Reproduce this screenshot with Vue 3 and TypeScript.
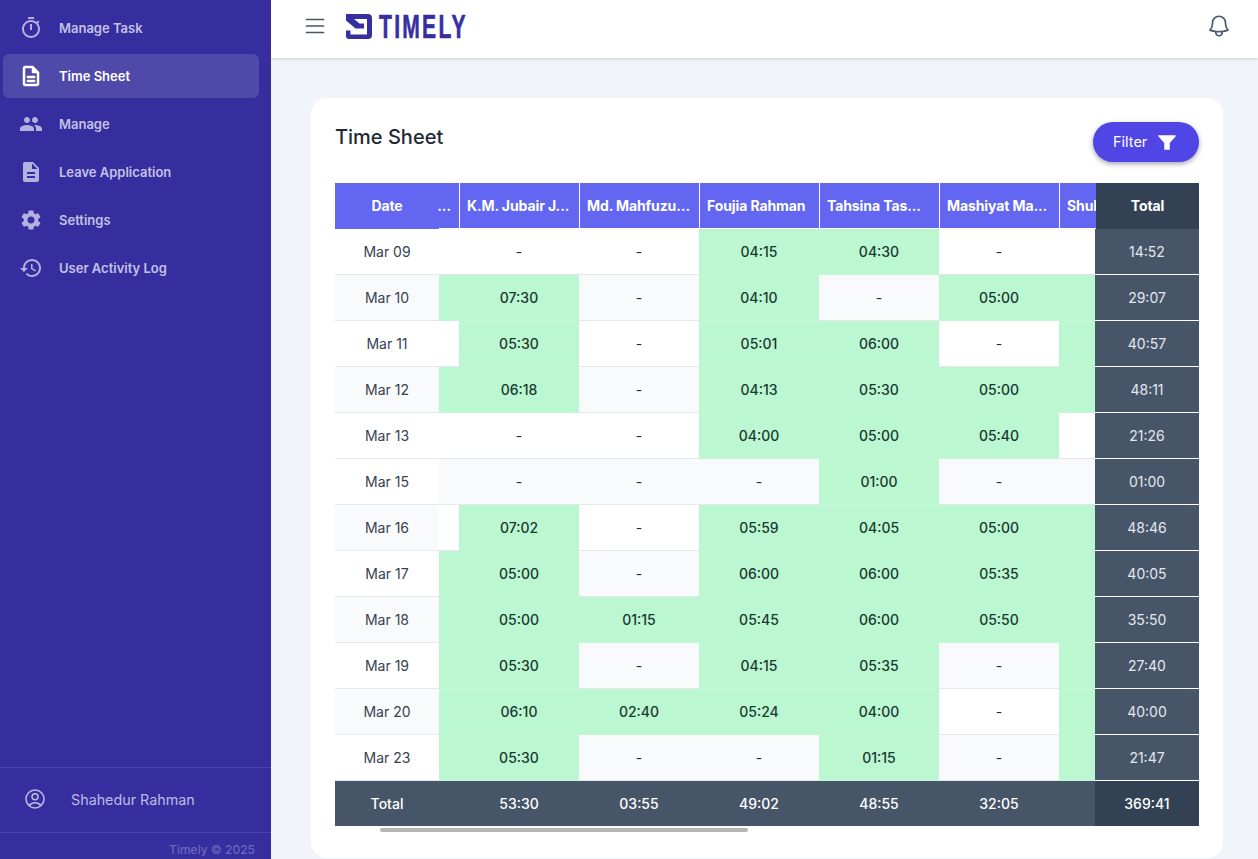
<script setup lang="ts">
interface NavItem { label: string; d: string; active?: boolean }
interface Row {
  date: string
  dateAlt: boolean
  alt: boolean
  prev: boolean
  cells: string[]
  last: boolean
  total: string
}

const nav: NavItem[] = [
  { label: 'Manage Task', d: 'M15 1H9v2h6V1zm-4 13h2V8h-2v6zm8.03-6.61l1.42-1.42c-.43-.51-.9-.99-1.41-1.41l-1.42 1.42C16.07 4.74 14.12 4 12 4c-4.97 0-9 4.03-9 9s4.02 9 9 9 9-4.03 9-9c0-2.12-.74-4.07-1.97-5.61zM12 20c-3.87 0-7-3.13-7-7s3.13-7 7-7 7 3.13 7 7-3.13 7-7 7z' },
  { label: 'Time Sheet', active: true, d: 'M8 16h8v2H8zm0-4h8v2H8zm6-10H6c-1.1 0-2 .9-2 2v16c0 1.1.89 2 1.99 2H18c1.1 0 2-.9 2-2V8l-6-6zm4 18H6V4h7v5h5v11z' },
  { label: 'Manage', d: 'M16 11c1.66 0 2.99-1.34 2.99-3S17.66 5 16 5c-1.66 0-3 1.34-3 3s1.34 3 3 3zm-8 0c1.66 0 2.99-1.34 2.99-3S9.66 5 8 5C6.34 5 5 6.34 5 8s1.34 3 3 3zm0 2c-2.33 0-7 1.17-7 3.5V19h14v-2.5c0-2.33-4.67-3.5-7-3.5zm8 0c-.29 0-.62.02-.97.05 1.16.84 1.97 1.97 1.97 3.45V19h6v-2.5c0-2.33-4.67-3.5-7-3.5z' },
  { label: 'Leave Application', d: 'M14 2H6c-1.1 0-1.99.9-1.99 2L4 20c0 1.1.89 2 1.99 2H18c1.1 0 2-.9 2-2V8l-6-6zm2 16H8v-2h8v2zm0-4H8v-2h8v2zm-3-5V3.5L18.5 9H13z' },
  { label: 'Settings', d: 'M19.14 12.94c.04-.3.06-.61.06-.94 0-.32-.02-.64-.07-.94l2.03-1.58c.18-.14.23-.41.12-.61l-1.92-3.32c-.12-.22-.37-.29-.59-.22l-2.39.96c-.5-.38-1.03-.7-1.62-.94l-.36-2.54c-.04-.24-.24-.41-.48-.41h-3.84c-.24 0-.43.17-.47.41l-.36 2.54c-.59.24-1.13.57-1.62.94l-2.39-.96c-.22-.08-.47 0-.59.22L2.74 8.87c-.12.21-.08.47.12.61l2.03 1.58c-.05.3-.09.63-.09.94s.02.64.07.94l-2.03 1.58c-.18.14-.23.41-.12.61l1.92 3.32c.12.22.37.29.59.22l2.39-.96c.5.38 1.03.7 1.62.94l.36 2.54c.05.24.24.41.48.41h3.84c.24 0 .44-.17.47-.41l.36-2.54c.59-.24 1.13-.56 1.62-.94l2.39.96c.22.08.47 0 .59-.22l1.92-3.32c.12-.22.07-.47-.12-.61l-2.01-1.58zM12 15.6c-1.98 0-3.6-1.62-3.6-3.6s1.62-3.6 3.6-3.6 3.6 1.62 3.6 3.6-1.62 3.6-3.6 3.6z' },
  { label: 'User Activity Log', d: 'M13 3c-4.97 0-9 4.03-9 9H1l3.89 3.89.07.14L9 12H6c0-3.87 3.13-7 7-7s7 3.13 7 7-3.13 7-7 7c-1.93 0-3.68-.79-4.94-2.06l-1.42 1.42C8.27 19.99 10.51 21 13 21c4.97 0 9-4.03 9-9s-4.03-9-9-9zm-1 5v5l4.28 2.54.72-1.21-3.5-2.08V8H12z' },
]

const heads = ['K.M. Jubair J...', 'Md. Mahfuzu...', 'Foujia Rahman', 'Tahsina Tas...', 'Mashiyat Ma...']

const rows: Row[] = [
  { date: 'Mar 09', dateAlt: false, alt: false, prev: false, cells: ['-', '-', '04:15', '04:30', '-'], last: false, total: '14:52' },
  { date: 'Mar 10', dateAlt: true, alt: true, prev: true, cells: ['07:30', '-', '04:10', '-', '05:00'], last: true, total: '29:07' },
  { date: 'Mar 11', dateAlt: false, alt: false, prev: false, cells: ['05:30', '-', '05:01', '06:00', '-'], last: true, total: '40:57' },
  { date: 'Mar 12', dateAlt: true, alt: true, prev: true, cells: ['06:18', '-', '04:13', '05:30', '05:00'], last: true, total: '48:11' },
  { date: 'Mar 13', dateAlt: false, alt: false, prev: false, cells: ['-', '-', '04:00', '05:00', '05:40'], last: false, total: '21:26' },
  { date: 'Mar 15', dateAlt: false, alt: true, prev: false, cells: ['-', '-', '-', '01:00', '-'], last: false, total: '01:00' },
  { date: 'Mar 16', dateAlt: true, alt: false, prev: false, cells: ['07:02', '-', '05:59', '04:05', '05:00'], last: true, total: '48:46' },
  { date: 'Mar 17', dateAlt: false, alt: true, prev: true, cells: ['05:00', '-', '06:00', '06:00', '05:35'], last: true, total: '40:05' },
  { date: 'Mar 18', dateAlt: true, alt: false, prev: true, cells: ['05:00', '01:15', '05:45', '06:00', '05:50'], last: true, total: '35:50' },
  { date: 'Mar 19', dateAlt: false, alt: true, prev: true, cells: ['05:30', '-', '04:15', '05:35', '-'], last: true, total: '27:40' },
  { date: 'Mar 20', dateAlt: true, alt: false, prev: true, cells: ['06:10', '02:40', '05:24', '04:00', '-'], last: true, total: '40:00' },
  { date: 'Mar 23', dateAlt: false, alt: true, prev: true, cells: ['05:30', '-', '-', '01:15', '-'], last: true, total: '21:47' },
]

const foot = ['53:30', '03:55', '49:02', '48:55', '32:05']
</script>

<template>
  <div class="app">
    <aside class="sidebar">
      <nav class="nav">
        <a v-for="item in nav" :key="item.label" class="nav-item" :class="{ active: item.active }">
          <svg class="nav-icon" viewBox="0 0 24 24" fill="currentColor"><path :d="item.d" /></svg>
          <span>{{ item.label }}</span>
        </a>
      </nav>
      <div class="user">
        <svg class="user-icon" viewBox="0 0 24 24" fill="none" stroke="currentColor" stroke-width="1.5" stroke-linecap="round" stroke-linejoin="round">
          <path d="M17.982 18.725A7.488 7.488 0 0012 15.75a7.488 7.488 0 00-5.982 2.975m11.963 0a9 9 0 10-11.963 0m11.963 0A8.966 8.966 0 0112 21a8.966 8.966 0 01-5.982-2.275M15 9.75a3 3 0 11-6 0 3 3 0 016 0z" />
        </svg>
        <span>Shahedur Rahman</span>
      </div>
      <div class="copy">Timely © 2025</div>
    </aside>

    <div class="content">
      <header class="topbar">
        <svg class="burger" viewBox="0 0 24 24" fill="none" stroke="currentColor" stroke-width="1.7" stroke-linecap="round">
          <path d="M3.5 5.5h17M3.5 12h17M3.5 18.5h17" />
        </svg>
        <div class="logo">
          <svg class="logo-mark" viewBox="0 0 26 25" fill="#372fa0">
            <path d="M0 0H22Q26 0 26 4V21Q26 25 22 25H3Q0 25 0 22V16.5H4.5V20.5H21V5H8L13.5 9.5H18V14.5H9.5L0 6.5Z" />
          </svg>
          <span class="logo-text">TIMELY</span>
        </div>
        <svg class="bell" viewBox="0 0 24 24" fill="none" stroke="currentColor" stroke-width="1.6" stroke-linecap="round" stroke-linejoin="round">
          <path d="M14.857 17.082a23.848 23.848 0 005.454-1.31A8.967 8.967 0 0118 9.75v-.7V9A6 6 0 006 9v.75a8.967 8.967 0 01-2.312 6.022c1.733.64 3.56 1.085 5.455 1.31m5.714 0a24.255 24.255 0 01-5.714 0m5.714 0a3 3 0 11-5.714 0" />
        </svg>
      </header>

      <main class="main">
        <section class="card">
          <div class="card-head">
            <h1 class="title">Time Sheet</h1>
            <button class="filter" type="button">
              <span class="filter-label">Filter</span>
              <svg class="filter-icon" viewBox="0 0 24 24" fill="currentColor">
                <path d="M3 4.5h18a.7.7 0 0 1 .5 1.2L15 13v7.5H9V13L2.5 5.7A.7.7 0 0 1 3 4.5z" />
              </svg>
            </button>
          </div>

          <div class="table">
            <div class="head-row">
              <div class="hc hc-date">Date</div>
              <div class="hc hc-prev">...</div>
              <div v-for="h in heads" :key="h" class="hc hc-name">{{ h }}</div>
              <div class="hc hc-last">Shuhana</div>
              <div class="hc hc-total">Total</div>
            </div>

            <div v-for="r in rows" :key="r.date" class="row">
              <div class="c c-date" :class="{ alt: r.dateAlt }">{{ r.date }}</div>
              <div class="c" :class="{ alt: r.alt, green: r.prev }"></div>
              <div
                v-for="(v, i) in r.cells"
                :key="i"
                class="c"
                :class="{ alt: r.alt, green: v !== '-' }"
              >{{ v }}</div>
              <div class="c" :class="{ alt: r.alt, green: r.last }"></div>
              <div class="c c-total">{{ r.total }}</div>
            </div>

            <div class="row foot-row">
              <div class="f">Total</div>
              <div class="f"></div>
              <div v-for="v in foot" :key="v" class="f">{{ v }}</div>
              <div class="f"></div>
              <div class="f f-total">369:41</div>
            </div>
          </div>
          <div class="scroll-thumb"></div>
        </section>
      </main>
    </div>
  </div>
</template>

<style scoped>
.app {
  display: flex;
  height: 859px;
  overflow: hidden;
  font-family: Inter, "Liberation Sans", sans-serif;
  background: #f1f4f9;
}

.sidebar {
  width: 271px;
  flex: none;
  display: flex;
  flex-direction: column;
  background: #362e9f;
  color: #c4c1e6;
}
.nav {
  flex: 1;
  display: flex;
  flex-direction: column;
  gap: 4px;
  padding: 6px 12px 0 3px;
}
.nav-item {
  display: flex;
  align-items: center;
  height: 44px;
  padding-left: 16px;
  gap: 16px;
  border-radius: 6px;
  font-size: 13px;
  font-weight: 600;
}
.nav-item.active {
  background: #4f49a9;
  color: #fff;
}
.nav-icon { width: 24px; height: 24px; flex: none; color: #b4b1e0; }
.nav-item.active .nav-icon {
  color: #fff;
  stroke: #fff;
  stroke-width: 0.5;
}

.user {
  display: flex;
  align-items: center;
  gap: 24px;
  padding-left: 23px;
  padding-bottom: 2px;
  box-sizing: border-box;
  height: 66px;
  border-top: 1px solid #4a43ab;
  border-bottom: 1px solid #4a43ab;
  font-size: 14.3px;
  color: #bdbae3;
}
.user-icon { width: 24px; height: 24px; flex: none; margin-top: -1px; }

.copy {
  height: 26px;
  padding: 9px 16px 0 0;
  box-sizing: border-box;
  text-align: right;
  font-size: 12px;
  font-weight: 500;
  color: #6b66bb;
}

.content {
  flex: 1;
  min-width: 0;
  display: flex;
  flex-direction: column;
}
.topbar {
  height: 58px;
  flex: none;
  box-sizing: border-box;
  display: flex;
  align-items: center;
  padding: 0 26px 0 32px;
  background: #fff;
  box-shadow: 0 1px 3px rgba(0, 0, 0, 0.16);
  position: relative;
}
.burger { width: 24px; height: 24px; color: #4b5563; flex: none; margin-top: -6px; }
.logo {
  display: flex;
  align-items: center;
  margin-left: 19px;
  flex: 1;
}
.logo-mark { width: 26px; height: 25px; flex: none; margin-top: -5px; }
.logo-text {
  display: inline-block;
  margin-left: 7px;
  margin-top: -5px;
  font-family: "Liberation Sans", sans-serif;
  font-weight: 700;
  font-size: 33px;
  line-height: 25px;
  letter-spacing: 3.5px;
  -webkit-text-stroke: 0.6px #372fa0;
  color: #372fa0;
  transform: scaleX(0.64);
  transform-origin: left center;
  white-space: nowrap;
}
.bell { width: 26px; height: 26px; color: #4b5b70; flex: none; margin-top: -6px; }

.main {
  flex: 1;
  min-height: 0;
  padding: 40px 35px 1px 40px;
}
.card {
  box-sizing: border-box;
  height: 760px;
  background: #fff;
  border-radius: 16px;
  padding: 24px 24px 0;
}
.card-head {
  display: flex;
  justify-content: space-between;
  align-items: flex-start;
  height: 61px;
}
.title {
  margin: 3px 0 0;
  font-size: 20px;
  line-height: 24px;
  font-weight: 500;
  color: #1f2937;
}
.filter {
  width: 106px;
  height: 40px;
  display: flex;
  align-items: center;
  justify-content: flex-start;
  padding: 0 0 0 20px;
  gap: 9px;
  border: 0;
  border-radius: 20px;
  background: #4f46e5;
  color: #fff;
  font: 400 14.5px Inter, "Liberation Sans", sans-serif;
  box-shadow: 0 2px 5px rgba(30, 27, 75, 0.4);
}
.filter-label { padding-bottom: 2px; }
.filter-icon { width: 22px; height: 22px; flex: none; }

.table { font-size: 14px; }
.head-row {
  display: grid;
  grid-template-columns: 104px 21px repeat(5, 120px) 36px 103px;
  height: 46px;
}
.hc {
  display: flex;
  align-items: center;
  justify-content: center;
  height: 45px;
  box-sizing: border-box;
  background: #6366f1;
  color: #fff;
  font-weight: 700;
  letter-spacing: -0.1px;
  white-space: nowrap;
  border-right: 1px solid #fff;
}
.hc-name { justify-content: flex-start; padding-left: 7px; }
.hc-date { height: 46px; border-right: 0; padding-bottom: 1px; }
.hc-prev { justify-content: flex-end; padding-right: 8px; }
.hc-last { justify-content: flex-start; padding-left: 7px; border-right: 0; overflow: hidden; }
.hc-total { height: 46px; background: #334155; border-right: 0; padding-bottom: 1px; }

.row {
  display: grid;
  grid-template-columns: 104px 20px repeat(5, 120px) 36px 104px;
  height: 46px;
}
.c {
  display: flex;
  align-items: center;
  justify-content: center;
  box-sizing: border-box;
  border-bottom: 1px solid #e5e7eb;
  background: #fff;
  color: #1f2937;
}
.c.alt { background: #f9fafb; }
.c.green {
  background: #bbf7d0;
  border-bottom-color: #c4f5d6;
  color: #1a3a32;
  font-weight: 500;
}
.c-date { color: #374151; }
.c-total {
  background: #475569;
  border-bottom-color: #fff;
  color: #e2e8f0;
}

.foot-row { height: 45px; }
.f {
  display: flex;
  align-items: center;
  justify-content: center;
  background: #475569;
  color: #fff;
  font-weight: 500;
}
.f-total { background: #334155; }

.scroll-thumb {
  width: 368px;
  height: 4px;
  margin: 2px 0 0 45px;
  border-radius: 2px;
  background: #b5b5b5;
}
</style>

<style>
html, body { margin: 0; overflow: hidden; }
</style>
